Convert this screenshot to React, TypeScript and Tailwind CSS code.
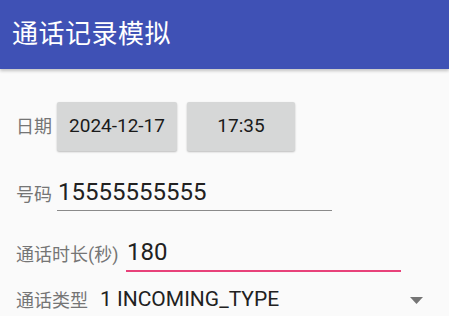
import { useState } from "react";

const font = { fontFamily: "Roboto, 'Noto Sans CJK SC', sans-serif" };

export default function App() {
  const [phone, setPhone] = useState("15555555555");
  const [duration, setDuration] = useState("180");

  return (
    <div className="w-[449px] h-[316px] overflow-hidden bg-[#fafafa]" style={font}>
      {/* App bar */}
      <div className="h-[69px] bg-[#3f51b5] flex items-center pl-[12px] shadow-[0_2px_3px_rgba(0,0,0,0.22)] relative z-10">
        <span className="text-white text-[26px] leading-none tracking-[0.5px] -mt-[2px]">通话记录模拟</span>
      </div>

      <div className="pl-[16px]">
        {/* 日期 */}
        <div className="flex items-center mt-[33px] h-[49px]">
          <span className="text-[18px] text-[#757575] w-[41px]">日期</span>
          <button className="w-[120px] h-[49px] bg-[#d6d7d7] rounded-[2px] shadow-[0_1px_2px_rgba(0,0,0,0.25)] text-[19px] text-[#1a1a1a]">
            2024-12-17
          </button>
          <button className="ml-[10px] w-[108px] h-[49px] bg-[#d6d7d7] rounded-[2px] shadow-[0_1px_2px_rgba(0,0,0,0.25)] text-[19px] text-[#1a1a1a]">
            17:35
          </button>
        </div>

        {/* 号码 */}
        <div className="flex items-end mt-[21px] h-[39px]">
          <span className="text-[18px] text-[#757575] w-[41px] mb-[3px]">号码</span>
          <div className="w-[275px] border-b-[1.5px] border-[#8a8a8a] pb-[2px]">
            <input
              value={phone}
              onChange={(e) => setPhone(e.target.value)}
              className="w-full bg-transparent outline-none text-[24px] leading-[32px] text-[#212121] pl-[1px]"
            />
          </div>
        </div>

        {/* 通话时长 */}
        <div className="flex items-end mt-[21px] h-[40px]">
          <span className="text-[18px] text-[#757575] w-[110px] mb-[4px]">通话时长(秒)</span>
          <div className="w-[275px] border-b-2 border-[#e8417a] pb-[2px]">
            <input
              value={duration}
              onChange={(e) => setDuration(e.target.value)}
              className="w-full bg-transparent outline-none text-[24px] leading-[32px] text-[#212121] pl-[1px]"
            />
          </div>
        </div>

        {/* 通话类型 */}
        <div className="flex items-center mt-[13px] h-[30px]">
          <span className="text-[18px] text-[#757575] w-[84px]">通话类型</span>
          <span className="text-[21px] text-[#212121]">1 INCOMING_TYPE</span>
          <svg width="13" height="7" viewBox="0 0 13 7" className="ml-auto mr-[26px]">
            <path d="M0 0 L13 0 L6.5 7 Z" fill="#757575" />
          </svg>
        </div>
      </div>
    </div>
  );
}
